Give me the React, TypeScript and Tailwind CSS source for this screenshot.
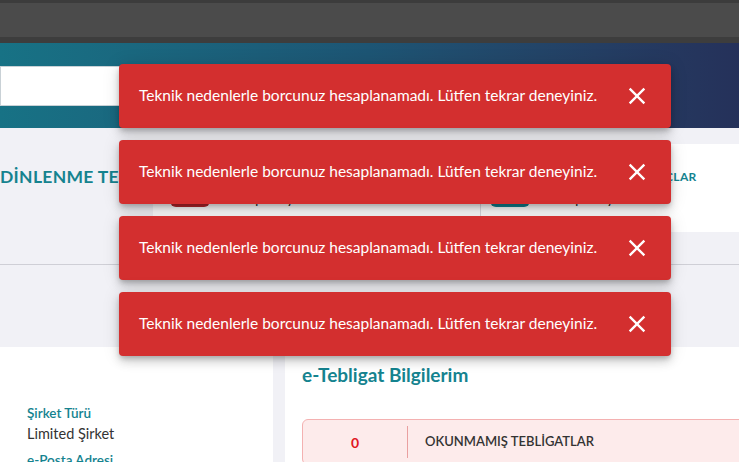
import React from 'react';

const message = 'Teknik nedenlerle borcunuz hesaplanamadı. Lütfen tekrar deneyiniz.';

// material-style close glyph
const CloseIcon: React.FC = () => (
  <svg viewBox="0 0 24 24" className="h-[28px] w-[28px]" fill="currentColor">
    <path d="M19 6.41 17.59 5 12 10.59 6.41 5 5 6.41 10.59 12 5 17.59 6.41 19 12 13.41 17.59 19 19 17.59 13.41 12z" />
  </svg>
);

const Toast: React.FC<{ text: string }> = ({ text }) => (
  <div className="flex h-16 w-[552px] items-center justify-between rounded bg-[#d32f2f] pl-5 pr-5 text-white shadow-[0_3px_5px_-1px_rgba(0,0,0,0.2),0_6px_10px_0_rgba(0,0,0,0.14),0_1px_18px_0_rgba(0,0,0,0.12)]">
    <span className="text-[15.5px] leading-none">{text}</span>
    <CloseIcon />
  </div>
);

const Stat: React.FC<{ label: string; value: string; color: string; pad: string }> = ({ label, value, color, pad }) => (
  <div className={`flex items-end gap-3 pb-[25px] ${pad}`}>
    <span className={`h-[44px] w-10 shrink-0 rounded-md ${color}`} />
    <div className="flex flex-col">
      <span className="whitespace-nowrap text-[12px] font-bold leading-[16px] tracking-[0.3px] text-[#15838f]">{label}</span>
      <span className="mt-[2px] whitespace-nowrap text-[15px] leading-[20px] text-[#333]">{value}</span>
    </div>
  </div>
);

const App: React.FC = () => {
  return (
    <div className="relative h-[462px] w-[739px] overflow-hidden bg-[#f1f1f6] font-['Lato',sans-serif]">
      {/* browser-like top strip */}
      <div className="h-[43px] border-y-[3px] border-t-[#3c3c3c] border-b-[6px] border-b-[#3d3d3d] bg-[#4b4b4b]" />

      {/* header banner with search */}
      <div className="flex h-[85px] items-center bg-gradient-to-r from-[#177285] via-[#1d5574] to-[#25315a]">
        <div className="h-10 w-[160px] border border-[#c9d1d6] bg-white" />
      </div>

      {/* summary section */}
      <div className="flex h-[137px] border-b border-[#cfcfd6] pt-4">
        <div className="w-[153px] shrink-0 pt-[21px]">
          <h2 className="whitespace-nowrap text-[17.5px] font-bold leading-[24px] tracking-[0.3px] text-[#15838f]">DİNLENME TESİSLERİ</h2>
        </div>
        <div className="flex h-[88px] flex-1 bg-white">
          <div className="flex w-[328px] shrink-0 items-end border-r border-[#dcdce2]">
            <Stat label="ÖDENMİŞ BORÇLAR" value="Hesaplanıyor..." color="bg-[#b3272d]" pad="pl-[17px]" />
          </div>
          <div className="flex flex-1 items-end">
            <Stat label="VADESİ GEÇMİŞ BORÇLAR" value="Hesaplanıyor..." color="bg-[#148390]" pad="pl-[9px]" />
          </div>
        </div>
      </div>

      {/* cards */}
      <div className="flex gap-3 pt-[82px]">
        <div className="h-[120px] w-[273px] shrink-0 bg-white pl-[27px] pt-[57px]">
          <div className="text-[13.5px] font-semibold leading-[18px] text-[#15838f]">Şirket Türü</div>
          <div className="mt-[1px] text-[14.5px] leading-[22px] text-[#333]">Limited Şirket</div>
          <div className="mt-[6px] text-[13.5px] font-semibold leading-[18px] text-[#15838f]">e-Posta Adresi</div>
        </div>
        <div className="h-[120px] flex-1 bg-white pl-[17px] pt-[16px]">
          <h3 className="text-[19px] font-bold leading-[24px] text-[#15838f]">e-Tebligat Bilgilerim</h3>
          <div className="mt-[32px] flex h-[46px] w-[460px] items-center rounded-md border border-[#f4b1b1] bg-[#fdebeb]">
            <div className="flex w-[104px] justify-center text-[14px] font-bold text-[#e0181e]">0</div>
            <div className="h-[32px] w-px bg-[#e9a0a0]" />
            <div className="pl-[17px] text-[13px] font-semibold text-[#333]">OKUNMAMIŞ TEBLİGATLAR</div>
          </div>
        </div>
      </div>

      {/* error notifications */}
      <div className="absolute left-[119px] top-[64px] flex flex-col gap-3">
        {[0, 1, 2, 3].map((i) => (
          <Toast key={i} text={message} />
        ))}
      </div>
    </div>
  );
};

export default App;
